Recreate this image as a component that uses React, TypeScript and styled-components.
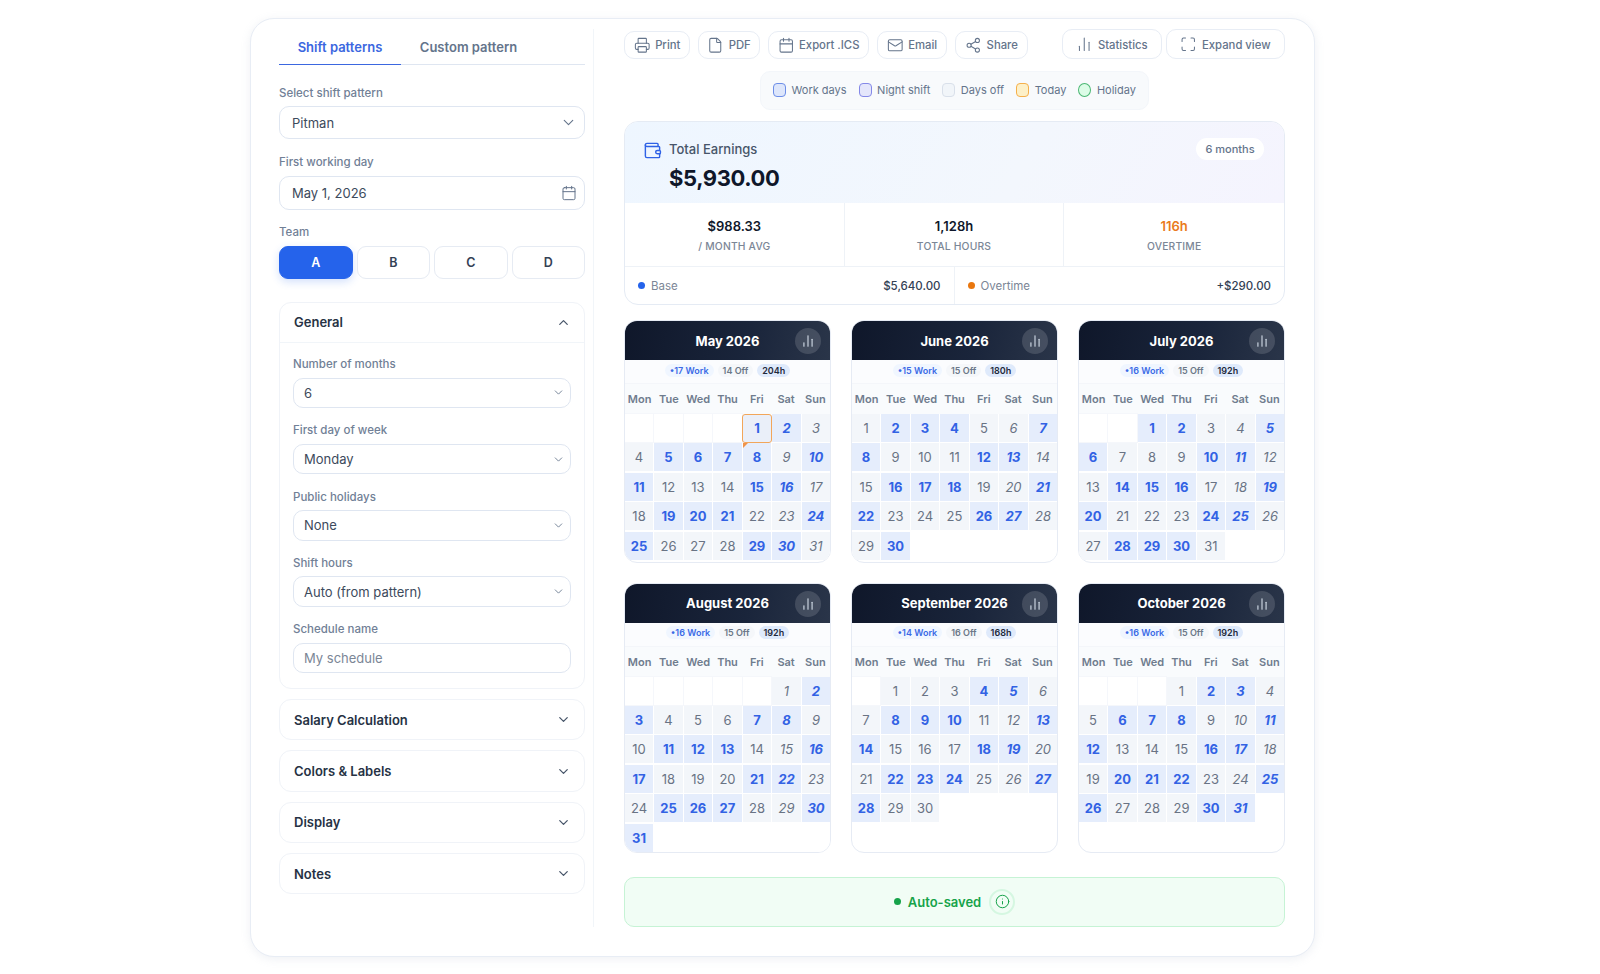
import styled, { createGlobalStyle } from 'styled-components';
import {
  Calendar,
  ChartNoAxesColumn,
  ChevronDown,
  ChevronUp,
  File,
  Info,
  Mail,
  Maximize,
  Printer,
  Share2,
  Wallet,
} from 'lucide-react';

const GlobalStyle = createGlobalStyle`
  html, body {
    margin: 0;
    background: #ffffff;
    font-family: Inter, "Liberation Sans", sans-serif;
    color: #0f172a;
  }
  * { box-sizing: border-box; }
`;

const Page = styled.div`
  width: 1600px;
  height: 974px;
  padding: 18px 285px 0 250px;
  overflow: hidden;
`;

const Shell = styled.div`
  display: flex;
  height: 939px;
  padding: 10px 29px 29px;
  border: 1px solid #e8edf5;
  border-radius: 24px;
  background: #fff;
  box-shadow: 0 2px 10px rgba(148, 163, 184, 0.16);
`;

const Sidebar = styled.aside`
  flex: 0 0 315px;
  padding-right: 8px;
  margin-left: -1px;
  border-right: 1px solid #f1f5f9;
`;

const Main = styled.main`
  flex: 1;
  min-width: 0;
  padding-left: 30px;
  display: flex;
  flex-direction: column;
`;

const Tabs = styled.div`
  display: flex;
  height: 36px;
  border-bottom: 1px solid #dfe6f1;
`;

const Tab = styled.div<{ $active?: boolean }>`
  width: ${(p) => (p.$active ? '122px' : '135px')};
  height: 36px;
  display: flex;
  align-items: center;
  justify-content: center;
  font-size: 13px;
  font-weight: 600;
  color: ${(p) => (p.$active ? '#3b67e0' : '#64748b')};
  border-bottom: ${(p) => (p.$active ? '1.5px solid #3b67e0' : 'none')};
`;

const Label = styled.div<{ $gap?: number }>`
  height: 16px;
  line-height: 16px;
  font-size: 11.5px;
  font-weight: 500;
  color: #718096;
  margin-bottom: ${(p) => p.$gap ?? 6}px;
`;

const Field = styled.div<{ $top: number }>`
  margin-top: ${(p) => p.$top}px;
`;

const Control = styled.div<{ $h: number; $inner?: boolean }>`
  height: ${(p) => p.$h}px;
  display: flex;
  align-items: center;
  justify-content: space-between;
  padding: 0 ${(p) => (p.$inner ? '5px 0 10px' : '7px 0 12px')};
  border: 1px solid #dfe6f1;
  border-radius: 10px;
  background: #fff;
  font-size: 13px;
  color: #3d4a5c;
`;

const NameInput = styled.input`
  display: block;
  width: 100%;
  height: 30.5px;
  padding: 0 10px;
  border: 1px solid #dfe6f1;
  border-radius: 10px;
  font: inherit;
  font-size: 13px;
  color: #334155;
  outline: none;
  &::placeholder { color: #7b8696; opacity: 1; }
`;

const TeamRow = styled.div`
  display: grid;
  grid-template-columns: repeat(4, 1fr);
  gap: 4px;
`;

const TeamButton = styled.div<{ $active?: boolean }>`
  height: 33px;
  display: flex;
  align-items: center;
  justify-content: center;
  border-radius: 9px;
  font-size: 12.5px;
  font-weight: 600;
  color: ${(p) => (p.$active ? '#fff' : '#334155')};
  background: ${(p) => (p.$active ? '#2563eb' : '#fff')};
  border: 1px solid ${(p) => (p.$active ? '#2563eb' : '#e6ebf3')};
  box-shadow: ${(p) => (p.$active ? '0 3px 8px rgba(37, 99, 235, 0.2)' : 'none')};
`;

const Accordions = styled.div`
  margin-top: 23px;
  display: flex;
  flex-direction: column;
  gap: 10px;
`;

const Accordion = styled.section`
  border: 1px solid #f0f3f8;
  border-radius: 12px;
  background: #fff;
`;

const AccordionHead = styled.div<{ $open?: boolean }>`
  height: ${(p) => (p.$open ? '40px' : '39.3px')};
  display: flex;
  align-items: center;
  justify-content: space-between;
  padding: ${(p) => (p.$open ? '0 13px 1px 14px' : '0 13px 0 14px')};
  font-size: 13px;
  font-weight: 600;
  color: #263244;
  border-bottom: ${(p) => (p.$open ? '1px solid #f1f5f9' : 'none')};
`;

const AccordionBody = styled.div`
  padding: 13px 13px 15px;
  display: flex;
  flex-direction: column;
  gap: 14.3px;
`;

const Toolbar = styled.div`
  display: flex;
  flex: none;
  align-items: flex-end;
  height: 30px;
`;

const ToolGroup = styled.div<{ $gap: number; $push?: boolean }>`
  display: flex;
  gap: ${(p) => p.$gap}px;
  margin-left: ${(p) => (p.$push ? 'auto' : '0')};
`;

const ToolButton = styled.div<{ $w: number; $tall?: boolean }>`
  width: ${(p) => p.$w}px;
  height: ${(p) => (p.$tall ? 30 : 28)}px;
  padding-top: ${(p) => (p.$tall ? 1 : 0)}px;
  display: flex;
  align-items: center;
  justify-content: center;
  gap: 5px;
  border: 1px solid #e8edf5;
  border-radius: 10px;
  font-size: 11.3px;
  font-weight: 500;
  color: #64748b;
  white-space: nowrap;
`;

const Legend = styled.div`
  align-self: center;
  flex: none;
  margin-top: 12px;
  height: 39px;
  width: 389px;
  padding-bottom: 1px;
  display: flex;
  align-items: center;
  justify-content: center;
  gap: 12px;
  background: #f8fafc;
  border: 1px solid #f3f6fa;
  border-radius: 10px;
  font-size: 11px;
  color: #64748b;
`;

const LegendItem = styled.div`
  display: flex;
  align-items: center;
  gap: 5.5px;
`;

const Swatch = styled.span<{ $bg: string; $line: string; $round?: boolean }>`
  width: 13px;
  height: 14px;
  border-radius: ${(p) => (p.$round ? '50%' : '4px')};
  background: ${(p) => p.$bg};
  border: 1.5px solid ${(p) => p.$line};
`;

const EarningsCard = styled.section`
  margin-top: 11px;
  height: 184px;
  border: 1px solid #e5ebf4;
  border-radius: 14px;
  overflow: hidden;
  background: #fff;
  flex: none;
`;

const EarningsTop = styled.div`
  height: 81px;
  padding: 16px 20px 16px 18px;
  display: flex;
  justify-content: space-between;
  align-items: flex-start;
  background: linear-gradient(120deg, #eef6ff 0%, #f3f7fd 60%, #f5f4fe 100%);
`;

const EarningsMain = styled.div`
  display: flex;
  gap: 7px;
`;

const EarningsLabel = styled.div`
  font-size: 13px;
  font-weight: 500;
  color: #475569;
  line-height: 20px;
  margin-top: 1px;
`;

const EarningsValue = styled.div`
  margin-top: 6px;
  font-size: 22px;
  font-weight: 700;
  letter-spacing: -0.4px;
  line-height: 27px;
  color: #0f172a;
`;

const WalletIcon = styled(Wallet)`
  margin-top: 3px;
  color: #2f62e6;
`;

const Pill = styled.div`
  width: 68px;
  height: 22px;
  display: flex;
  align-items: center;
  justify-content: center;
  border-radius: 11px;
  background: #fff;
  font-size: 11px;
  font-weight: 500;
  color: #64748b;
`;

const StatRow = styled.div`
  height: 64px;
  display: grid;
  grid-template-columns: repeat(3, 1fr);
  border-bottom: 1px solid #eef2f7;
`;

const Stat = styled.div`
  display: flex;
  flex-direction: column;
  align-items: center;
  padding-top: 15px;
  &:not(:last-child) { border-right: 1px solid #eef2f7; }
`;

const StatValue = styled.div<{ $warn?: boolean }>`
  font-size: 13px;
  font-weight: 600;
  line-height: 16px;
  color: ${(p) => (p.$warn ? '#ea7a1c' : '#0f172a')};
`;

const StatLabel = styled.div`
  margin-top: 5px;
  font-size: 10.3px;
  font-weight: 500;
  line-height: 14px;
  letter-spacing: 0.2px;
  color: #7b8696;
`;

const BreakdownRow = styled.div`
  height: 37px;
  display: grid;
  grid-template-columns: 1fr 1fr;
`;

const Breakdown = styled.div`
  display: flex;
  align-items: center;
  padding: 0 13px;
  font-size: 11.5px;
  color: #7b8696;
  &:first-child { border-right: 1px solid #eef2f7; }
`;

const Dot = styled.span<{ $c: string }>`
  width: 7px;
  height: 7px;
  border-radius: 50%;
  background: ${(p) => p.$c};
  margin-right: 6px;
`;

const Amount = styled.span`
  margin-left: auto;
  color: #334155;
  font-weight: 500;
`;

const Months = styled.div`
  margin-top: 15px;
  display: grid;
  grid-template-columns: repeat(3, 1fr);
  grid-template-rows: 243px 270.5px;
  column-gap: 20px;
  row-gap: 19.5px;
  flex: none;
`;

const MonthCard = styled.article`
  border: 1px solid #e6ebf4;
  border-radius: 13px;
  overflow: hidden;
  background: #fff;
`;

const MonthHead = styled.header`
  position: relative;
  height: 39px;
  display: flex;
  align-items: center;
  justify-content: center;
  font-size: 13px;
  font-weight: 700;
  color: #fff;
  background: linear-gradient(100deg, #0f172a 0%, #1a253b 60%, #2a3549 100%);
`;

const ChartBadge = styled.div`
  position: absolute;
  top: 7px;
  right: 9px;
  width: 26px;
  height: 26px;
  display: flex;
  align-items: center;
  justify-content: center;
  border-radius: 50%;
  background: rgba(255, 255, 255, 0.14);
  color: #cbd5e1;
`;

const MonthStats = styled.div`
  height: 24px;
  padding-bottom: 3px;
  display: flex;
  align-items: center;
  justify-content: center;
  gap: 4px;
  background: #fbfcfe;
  border-bottom: 1px solid #f4f6fa;
`;

const MonthChip = styled.span<{ $bg: string; $c: string }>`
  height: 13px;
  line-height: 13px;
  padding: 0 5px;
  border-radius: 7px;
  font-size: 9px;
  font-weight: 600;
  background: ${(p) => p.$bg};
  color: ${(p) => p.$c};
  white-space: nowrap;
`;

const Weekdays = styled.div`
  height: 30px;
  display: grid;
  grid-template-columns: repeat(7, 1fr);
  align-items: center;
  background: #f9fbfd;
`;

const Weekday = styled.div`
  text-align: center;
  font-size: 11px;
  font-weight: 600;
  color: #6f7c8e;
`;

const Days = styled.div`
  display: grid;
  grid-template-columns: repeat(7, 1fr);
  grid-auto-rows: 28px;
  gap: 1.45px;
  background: #fff;
`;

type DayKind = 'work' | 'off' | 'empty';

const Day = styled.div<{ $kind: DayKind; $weekend?: boolean; $today?: boolean; $marked?: boolean }>`
  position: relative;
  display: flex;
  align-items: center;
  justify-content: center;
  font-size: 13px;
  font-weight: ${(p) => (p.$kind === 'work' ? 700 : 400)};
  font-style: ${(p) => (p.$weekend ? 'italic' : 'normal')};
  color: ${(p) => (p.$kind === 'work' ? '#3262e4' : '#697384')};
  background: ${(p) =>
    p.$kind === 'work' ? '#e5edfc' : p.$kind === 'off' ? '#f3f6fa' : '#fff'};
  box-shadow: ${(p) => (p.$kind === 'empty' ? '0 0 0 1px #f5f7fb' : 'none')};
  ${(p) =>
    p.$today &&
    `
    margin: -0.5px;
    border: 1.5px solid #f2a65a;
    border-radius: 3px;
    background: #eaeff9;
  `}
  ${(p) =>
    p.$marked &&
    `
    &::before {
      content: '';
      position: absolute;
      top: 0;
      left: 0;
      border-top: 5px solid #f0934a;
      border-right: 5px solid transparent;
    }
  `}
`;

const Saved = styled.div`
  margin-top: 24px;
  height: 50px;
  padding-bottom: 1px;
  display: flex;
  align-items: center;
  justify-content: center;
  flex: none;
  border: 1px solid #c6f3d5;
  border-radius: 10px;
  background: #f1fdf5;
  font-size: 13px;
  font-weight: 600;
  color: #16a34a;
`;

const SavedDot = styled.span`
  width: 7px;
  height: 7px;
  border-radius: 50%;
  background: #16a34a;
  margin-right: 7px;
`;

const InfoRing = styled.span`
  width: 26px;
  height: 26px;
  margin-left: 8px;
  display: flex;
  align-items: center;
  justify-content: center;
  border: 2px solid #d5f7e1;
  border-radius: 50%;
`;

interface MonthData {
  name: string;
  blanks: number;
  length: number;
  work: number[];
  off: number;
  hours: string;
}

const months: MonthData[] = [
  { name: 'May 2026', blanks: 4, length: 31, off: 14, hours: '204h', work: [1, 2, 5, 6, 7, 8, 10, 11, 15, 16, 19, 20, 21, 24, 25, 29, 30] },
  { name: 'June 2026', blanks: 0, length: 30, off: 15, hours: '180h', work: [2, 3, 4, 7, 8, 12, 13, 16, 17, 18, 21, 22, 26, 27, 30] },
  { name: 'July 2026', blanks: 2, length: 31, off: 15, hours: '192h', work: [1, 2, 5, 6, 10, 11, 14, 15, 16, 19, 20, 24, 25, 28, 29, 30] },
  { name: 'August 2026', blanks: 5, length: 31, off: 15, hours: '192h', work: [2, 3, 7, 8, 11, 12, 13, 16, 17, 21, 22, 25, 26, 27, 30, 31] },
  { name: 'September 2026', blanks: 1, length: 30, off: 16, hours: '168h', work: [4, 5, 8, 9, 10, 13, 14, 18, 19, 22, 23, 24, 27, 28] },
  { name: 'October 2026', blanks: 3, length: 31, off: 15, hours: '192h', work: [2, 3, 6, 7, 8, 11, 12, 16, 17, 20, 21, 22, 25, 26, 30, 31] },
];

const weekdays = ['Mon', 'Tue', 'Wed', 'Thu', 'Fri', 'Sat', 'Sun'];

function Month({ data, first }: { data: MonthData; first: boolean }) {
  const days = Array.from({ length: data.length }, (_, i) => i + 1);

  return (
    <MonthCard>
      <MonthHead>
        {data.name}
        <ChartBadge>
          <ChartNoAxesColumn size={14} strokeWidth={2} />
        </ChartBadge>
      </MonthHead>
      <MonthStats>
        <MonthChip $bg="#f0f6ff" $c="#3b6ae6">•{data.work.length} Work</MonthChip>
        <MonthChip $bg="#f5f7fa" $c="#6b7788">{data.off} Off</MonthChip>
        <MonthChip $bg="#dfeafb" $c="#1e293b">{data.hours}</MonthChip>
      </MonthStats>
      <Weekdays>
        {weekdays.map((w) => (
          <Weekday key={w}>{w}</Weekday>
        ))}
      </Weekdays>
      <Days>
        {Array.from({ length: data.blanks }, (_, i) => (
          <Day key={`blank-${i}`} $kind="empty" />
        ))}
        {days.map((d) => {
          const column = (data.blanks + d - 1) % 7;
          return (
            <Day
              key={d}
              $kind={data.work.includes(d) ? 'work' : 'off'}
              $weekend={column >= 5}
              $today={first && d === 1}
              $marked={first && d === 8}
            >
              {d}
            </Day>
          );
        })}
      </Days>
    </MonthCard>
  );
}

function Select({ value, inner }: { value: string; inner?: boolean }) {
  return (
    <Control $h={inner ? 30.5 : 33} $inner={inner}>
      {value}
      <ChevronDown size={inner ? 13 : 17} strokeWidth={1.6} color="#64748b" />
    </Control>
  );
}

const generalFields = [
  ['Number of months', '6'],
  ['First day of week', 'Monday'],
  ['Public holidays', 'None'],
  ['Shift hours', 'Auto (from pattern)'],
];

const collapsed = ['Salary Calculation', 'Colors & Labels', 'Display', 'Notes'];

export default function App() {
  return (
    <>
      <GlobalStyle />
      <Page>
        <Shell>
          <Sidebar>
            <Tabs>
              <Tab $active>Shift patterns</Tab>
              <Tab>Custom pattern</Tab>
            </Tabs>
            <Field $top={20}>
              <Label $gap={5}>Select shift pattern</Label>
              <Select value="Pitman" />
            </Field>
            <Field $top={15}>
              <Label>First working day</Label>
              <Control $h={34}>
                May 1, 2026
                <Calendar size={16} strokeWidth={1.5} color="#64748b" />
              </Control>
            </Field>
            <Field $top={14}>
              <Label>Team</Label>
              <TeamRow>
                <TeamButton $active>A</TeamButton>
                <TeamButton>B</TeamButton>
                <TeamButton>C</TeamButton>
                <TeamButton>D</TeamButton>
              </TeamRow>
            </Field>
            <Accordions>
              <Accordion>
                <AccordionHead $open>
                  General
                  <ChevronUp size={15} strokeWidth={2} color="#475569" />
                </AccordionHead>
                <AccordionBody>
                  {generalFields.map(([label, value]) => (
                    <div key={label}>
                      <Label $gap={5.5}>{label}</Label>
                      <Select value={value} inner />
                    </div>
                  ))}
                  <div>
                    <Label $gap={5.5}>Schedule name</Label>
                    <NameInput placeholder="My schedule" />
                  </div>
                </AccordionBody>
              </Accordion>
              {collapsed.map((title) => (
                <Accordion key={title}>
                  <AccordionHead>
                    {title}
                    <ChevronDown size={15} strokeWidth={2} color="#475569" />
                  </AccordionHead>
                </Accordion>
              ))}
            </Accordions>
          </Sidebar>

          <Main>
            <Toolbar>
              <ToolGroup $gap={8}>
                <ToolButton $w={66}><Printer size={16.5} strokeWidth={1.5} />Print</ToolButton>
                <ToolButton $w={62}><File size={16.5} strokeWidth={1.5} />PDF</ToolButton>
                <ToolButton $w={101}><Calendar size={16.5} strokeWidth={1.5} />Export .ICS</ToolButton>
                <ToolButton $w={70}><Mail size={16.5} strokeWidth={1.5} />Email</ToolButton>
                <ToolButton $w={73}><Share2 size={16.5} strokeWidth={1.5} />Share</ToolButton>
              </ToolGroup>
              <ToolGroup $gap={4} $push>
                <ToolButton $w={100} $tall><ChartNoAxesColumn size={16.5} strokeWidth={1.5} />Statistics</ToolButton>
                <ToolButton $w={119} $tall><Maximize size={16.5} strokeWidth={1.5} />Expand view</ToolButton>
              </ToolGroup>
            </Toolbar>

            <Legend>
              <LegendItem><Swatch $bg="#dde6fb" $line="#6d8ee8" />Work days</LegendItem>
              <LegendItem><Swatch $bg="#e4e6fb" $line="#8488e8" />Night shift</LegendItem>
              <LegendItem><Swatch $bg="#f1f5f9" $line="#d9e0ea" />Days off</LegendItem>
              <LegendItem><Swatch $bg="#fdf0c8" $line="#f5b04c" />Today</LegendItem>
              <LegendItem><Swatch $bg="#dcfce7" $line="#4cb874" $round />Holiday</LegendItem>
            </Legend>

            <EarningsCard>
              <EarningsTop>
                <EarningsMain>
                  <WalletIcon size={19} strokeWidth={1.8} />
                  <div>
                    <EarningsLabel>Total Earnings</EarningsLabel>
                    <EarningsValue>$5,930.00</EarningsValue>
                  </div>
                </EarningsMain>
                <Pill>6 months</Pill>
              </EarningsTop>
              <StatRow>
                <Stat><StatValue>$988.33</StatValue><StatLabel>/ MONTH AVG</StatLabel></Stat>
                <Stat><StatValue>1,128h</StatValue><StatLabel>TOTAL HOURS</StatLabel></Stat>
                <Stat><StatValue $warn>116h</StatValue><StatLabel>OVERTIME</StatLabel></Stat>
              </StatRow>
              <BreakdownRow>
                <Breakdown><Dot $c="#2563eb" />Base<Amount>$5,640.00</Amount></Breakdown>
                <Breakdown><Dot $c="#e9770f" />Overtime<Amount>+$290.00</Amount></Breakdown>
              </BreakdownRow>
            </EarningsCard>

            <Months>
              {months.map((m, i) => (
                <Month key={m.name} data={m} first={i === 0} />
              ))}
            </Months>

            <Saved>
              <SavedDot />
              Auto-saved
              <InfoRing><Info size={15} strokeWidth={1.6} /></InfoRing>
            </Saved>
          </Main>
        </Shell>
      </Page>
    </>
  );
}
